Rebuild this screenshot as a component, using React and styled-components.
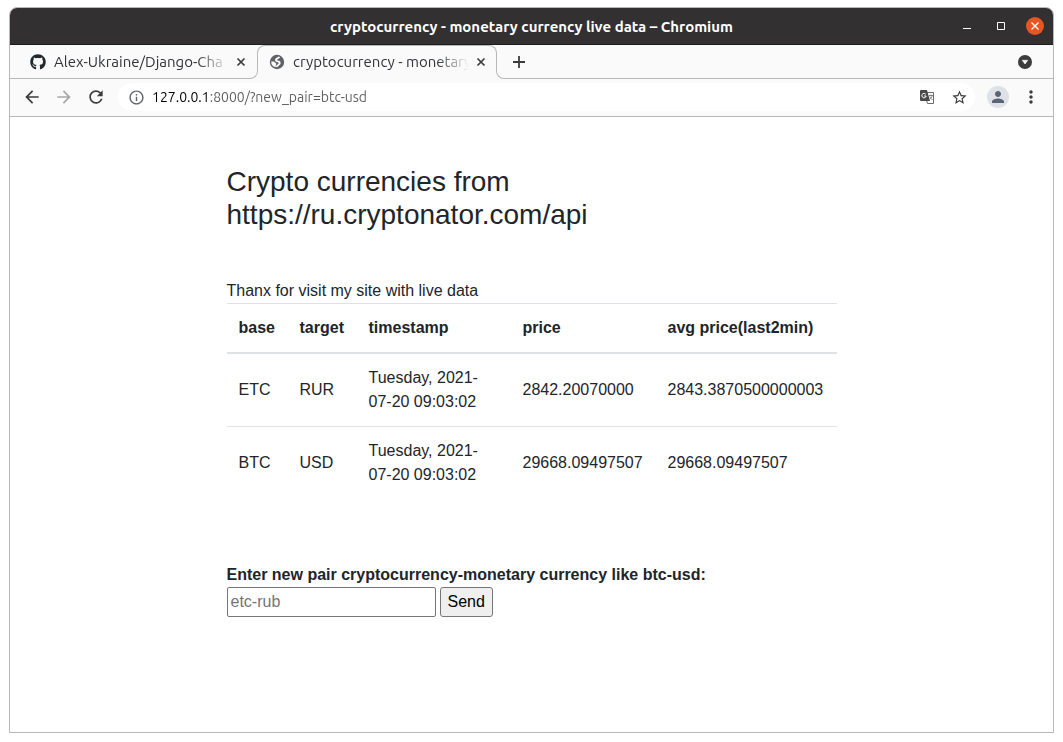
import React from "react";
import styled, { createGlobalStyle, css } from "styled-components";
import {
  MdArrowBack,
  MdArrowForward,
  MdRefresh,
  MdInfoOutline,
  MdStarBorder,
  MdPerson,
  MdMoreVert,
} from "react-icons/md";
import { FaGithub } from "react-icons/fa";

const uiFont = '"Ubuntu", "Noto Sans", "Open Sans", sans-serif';
const line = "#b8b8b8";

const GlobalStyle = createGlobalStyle`
  *, *::before, *::after { box-sizing: border-box; }
  body {
    margin: 0;
    background: #fff;
    color: #212529;
    font: 16px/24px "Liberation Sans", Arial, sans-serif;
  }
`;

const Desktop = styled.div`
  display: flex;
  min-height: 100vh;
  padding: 7px 9px 9px;
`;

const Window = styled.div`
  flex: 1;
  min-width: 0;
  display: flex;
  flex-direction: column;
  border: 1px solid ${line};
  border-radius: 8px 8px 0 0;
  overflow: hidden;
`;

const TitleBar = styled.header`
  display: grid;
  grid-template-columns: 1fr auto 1fr;
  align-items: center;
  height: 37px;
  padding: 0 9px;
  background: #323031;
  border-bottom: 1px solid #1c1c1c;
  color: #fff;
`;

const WindowTitle = styled.div`
  grid-column: 2;
  padding-top: 2px;
  font: bold 15px/22px ${uiFont};
  white-space: nowrap;
`;

const WindowButtons = styled.div`
  display: flex;
  justify-content: flex-end;
  align-items: center;
  gap: 16px;
`;

const IconButton = styled.button`
  display: inline-flex;
  flex: none;
  align-items: center;
  justify-content: center;
  width: ${(p) => p.$size || 20}px;
  height: ${(p) => p.$size || 20}px;
  padding: 0;
  border: 0;
  border-radius: 50%;
  background: ${(p) => p.$fill || "transparent"};
  color: ${(p) => p.$color || "#3c3c3c"};
`;

const TabStrip = styled.div`
  display: flex;
  height: 34px;
  background: #fafafa;
`;

const Tab = styled.div`
  display: flex;
  align-items: center;
  gap: 8px;
  flex: none;
  color: #303236;
  ${(p) =>
    p.$active
      ? css`
          position: relative;
          width: 240px;
          margin: 0 -1px;
          padding: 0 8px 0 12px;
          &::before {
            content: "";
            position: absolute;
            inset: 0 0 8px;
            border: 1px solid ${line};
            border-bottom: 0;
            border-radius: 8px 8px 0 0;
            pointer-events: none;
          }
        `
      : css`
          width: 239px;
          padding-left: 20px;
          border-bottom: 1px solid ${line};
        `}
`;

const TabFoot = styled.span`
  flex: none;
  align-self: flex-end;
  width: 9px;
  height: 9px;
  border-bottom: 1px solid ${line};
  ${(p) =>
    p.$right
      ? `border-left: 1px solid ${line}; border-bottom-left-radius: 8px;`
      : `border-right: 1px solid ${line}; border-bottom-right-radius: 8px;`}
`;

const TabTitle = styled.span`
  flex: 1;
  min-width: 0;
  margin-right: -4px;
  overflow: hidden;
  white-space: nowrap;
  font: 15px/20px ${uiFont};
  mask-image: linear-gradient(to right, #000 calc(100% - 32px), transparent);
`;

const StripRest = styled.div`
  flex: 1;
  display: flex;
  align-items: center;
  justify-content: space-between;
  padding: 0 18px 0 4px;
  border-bottom: 1px solid ${line};
`;

const Toolbar = styled.nav`
  display: flex;
  align-items: center;
  gap: 12px;
  height: 38px;
  padding: 0 12px 1px;
  background: #fafafa;
  border-bottom: 1px solid ${line};
`;

const AddressBar = styled.label`
  flex: 1;
  display: flex;
  align-items: center;
  gap: 6px;
  height: 28px;
  padding: 0 6px 0 8px;
  border-radius: 14px;
  background: #fff;
  color: #5f6368;
`;

const AddressInput = styled.input`
  flex: 1;
  min-width: 0;
  padding: 0;
  border: 0;
  outline: 0;
  font: 14px/20px ${uiFont};
  color: transparent;
  background: linear-gradient(to right, #000 57px, #5c5c5c 57px);
  background-clip: text;
`;

const AddressActions = styled.span`
  display: flex;
  gap: 12px;
`;

const Page = styled.main`
  flex: 1;
  width: 100%;
  max-width: 610px;
  margin: 0 auto;
  padding: 48px 0;
`;

const Heading = styled.h1`
  margin: 0 0 48px;
  font-size: 28px;
  font-weight: 400;
  line-height: 33px;
`;

const Intro = styled.p`
  margin: 0;
`;

const PairTable = styled.table`
  width: 100%;
  margin: 0 0 64px;
  border-collapse: collapse;
`;

const HeadCell = styled.th`
  width: ${(p) => p.$width};
  padding: 12px;
  border-top: 1px solid #dee2e6;
  border-bottom: 2px solid #dee2e6;
  text-align: left;
`;

const Cell = styled.td`
  padding: 12px;
  border-top: 1px solid #dee2e6;
  vertical-align: middle;
`;

const PairForm = styled.form`
  display: flex;
  flex-wrap: wrap;
  gap: 0 4px;
`;

const PairLabel = styled.label`
  flex: 0 0 100%;
  font-weight: bold;
`;

const PairInput = styled.input`
  width: 209px;
  height: 30px;
  padding: 1px 3px;
  border: 1px solid #767676;
  border-radius: 2px;
  font: inherit;
  &::placeholder {
    color: #757575;
  }
`;

const SendButton = styled.button`
  height: 30px;
  padding: 1px 7px;
  border: 1px solid #767676;
  border-radius: 3px;
  background: #efefef;
  color: #000;
  font: inherit;
`;

const MinimizeIcon = () => (
  <svg width="18" height="18" viewBox="0 0 18 18" aria-hidden="true">
    <path d="M5 11.5h8" stroke="currentColor" />
  </svg>
);

const MaximizeIcon = () => (
  <svg width="18" height="18" viewBox="0 0 18 18" aria-hidden="true">
    <path d="M5.5 5.5h7v7h-7z" fill="none" stroke="currentColor" />
  </svg>
);

const CloseIcon = () => (
  <svg width="18" height="18" viewBox="0 0 18 18" aria-hidden="true">
    <path d="M5.5 5.5l7 7m0-7l-7 7" stroke="currentColor" strokeWidth="1.3" />
  </svg>
);

const TabCloseIcon = () => (
  <svg width="16" height="16" viewBox="0 0 16 16" aria-hidden="true">
    <path d="M4.5 4.5l7 7m0-7l-7 7" stroke="currentColor" strokeWidth="1.7" />
  </svg>
);

const PlusIcon = () => (
  <svg width="20" height="20" viewBox="0 0 20 20" aria-hidden="true">
    <path d="M4 10h12M10 4v12" stroke="currentColor" strokeWidth="1.8" />
  </svg>
);

const GlobeIcon = () => (
  <svg width="16" height="16" viewBox="0 0 16 16" fill="none" aria-hidden="true">
    <circle cx="8" cy="8" r="7.2" fill="#5f6368" />
    <path
      d="M10.2 2.8C9.8 4.8 6.8 4 6.8 6s3.200 1 3.900 2.500c.8 2-2.500 2-3.200 4.500"
      stroke="#fafafa"
      strokeWidth="1.8"
    />
    <path d="M2.2 7.4h2.600l2.400 2-.6 3.800C3.800 12.600 2 10.400 2.200 7.400z" fill="#fafafa" />
  </svg>
);

const TabSearchIcon = () => (
  <svg width="14" height="14" viewBox="0 0 14 14" aria-hidden="true">
    <circle cx="7" cy="7" r="7" fill="#3c3c3c" />
    <path d="M4.3 5.3h5.4L7 9z" fill="#fff" stroke="#fff" strokeWidth=".6" strokeLinejoin="round" />
  </svg>
);

const TranslateIcon = () => (
  <svg width="14" height="14" viewBox="0 0 14 14" fill="none" aria-hidden="true">
    <path d="M6.5 2.5h7v11H7.5l-1-3" stroke="#6a6a6a" />
    <path d="M1 0h6l3 11H1a1 1 0 0 1-1-1V1a1 1 0 0 1 1-1z" fill="#4a4a4a" />
    <path d="M5.8 4.3A2.2 2.2 0 1 0 6.2 6H4.2" stroke="#fff" />
    <path d="M9 5.5h4M11 4.5v1M12.2 5.5c-.4 2-1.5 3-2.5 4M9.8 6.5c.5 1.3 1.5 2.5 2.7 3.5" stroke="#777" strokeWidth=".9" />
  </svg>
);

const columns = [
  ["base", "61px"],
  ["target", "69px"],
  ["timestamp", "154px"],
  ["price", "145px"],
  ["avg price(last2min)", "auto"],
];

const pairs = [
  ["ETC", "RUR", "Tuesday, 2021-07-20 09:03:02", "2842.20070000", "2843.3870500000003"],
  ["BTC", "USD", "Tuesday, 2021-07-20 09:03:02", "29668.09497507", "29668.09497507"],
];

export default function App() {
  return (
    <Desktop>
      <GlobalStyle />
      <Window>
        <TitleBar>
          <WindowTitle>cryptocurrency - monetary currency live data – Chromium</WindowTitle>
          <WindowButtons>
            <IconButton $size={18} $color="#fff" aria-label="Minimize"><MinimizeIcon /></IconButton>
            <IconButton $size={18} $color="#fff" aria-label="Maximize"><MaximizeIcon /></IconButton>
            <IconButton $size={18} $color="#fff" $fill="#e95420" aria-label="Close"><CloseIcon /></IconButton>
          </WindowButtons>
        </TitleBar>

        <TabStrip>
          <Tab>
            <FaGithub size={16} color="#24292e" />
            <TabTitle>Alex-Ukraine/Django-Cha</TabTitle>
            <IconButton $size={16} aria-label="Close tab"><TabCloseIcon /></IconButton>
          </Tab>
          <TabFoot />
          <Tab $active>
            <GlobeIcon />
            <TabTitle>cryptocurrency - monetary</TabTitle>
            <IconButton $size={16} aria-label="Close tab"><TabCloseIcon /></IconButton>
          </Tab>
          <TabFoot $right />
          <StripRest>
            <IconButton aria-label="New tab"><PlusIcon /></IconButton>
            <IconButton aria-label="Search tabs"><TabSearchIcon /></IconButton>
          </StripRest>
        </TabStrip>

        <Toolbar>
          <IconButton aria-label="Back"><MdArrowBack size={20} /></IconButton>
          <IconButton $color="#a8a8a8" aria-label="Forward"><MdArrowForward size={20} /></IconButton>
          <IconButton aria-label="Reload"><MdRefresh size={20} /></IconButton>
          <AddressBar>
            <IconButton aria-label="Site information" $color="#5f6368"><MdInfoOutline size={17} /></IconButton>
            <AddressInput aria-label="Address" defaultValue="127.0.0.1:8000/?new_pair=btc-usd" />
            <AddressActions>
              <IconButton aria-label="Translate"><TranslateIcon /></IconButton>
              <IconButton aria-label="Bookmark"><MdStarBorder size={17} /></IconButton>
            </AddressActions>
          </AddressBar>
          <IconButton $size={22} $fill="#dee1e6" $color="#5a6376" aria-label="Profile"><MdPerson size={18} /></IconButton>
          <IconButton aria-label="Menu"><MdMoreVert size={20} /></IconButton>
        </Toolbar>

        <Page>
          <Heading>
            Crypto currencies from
            <br />
            https://ru.cryptonator.com/api
          </Heading>
          <Intro>Thanx for visit my site with live data</Intro>
          <PairTable>
            <thead>
              <tr>
                {columns.map(([name, width]) => (
                  <HeadCell key={name} $width={width} scope="col">{name}</HeadCell>
                ))}
              </tr>
            </thead>
            <tbody>
              {pairs.map((row) => (
                <tr key={row[0]}>
                  {row.map((value, i) => (
                    <Cell key={i}>{value}</Cell>
                  ))}
                </tr>
              ))}
            </tbody>
          </PairTable>
          <PairForm onSubmit={(e) => e.preventDefault()}>
            <PairLabel htmlFor="new-pair">Enter new pair cryptocurrency-monetary currency like btc-usd:</PairLabel>
            <PairInput id="new-pair" name="new_pair" placeholder="etc-rub" />
            <SendButton type="submit">Send</SendButton>
          </PairForm>
        </Page>
      </Window>
    </Desktop>
  );
}
